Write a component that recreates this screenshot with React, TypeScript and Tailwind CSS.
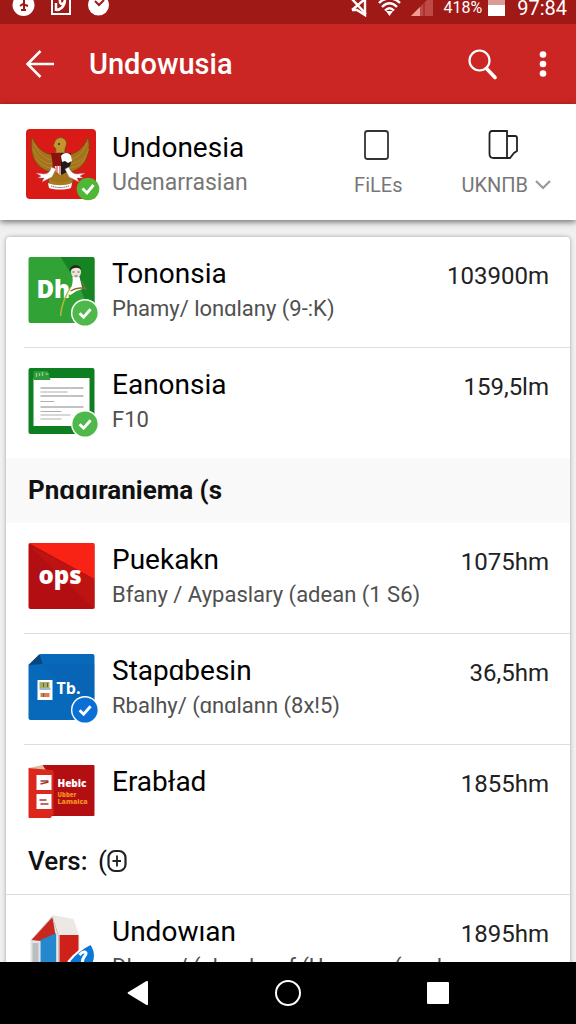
import type { ReactNode } from "react";

function Badge({ color, className }: { color: string; className: string }) {
  return (
    <svg viewBox="0 0 28 28" className={`absolute ${className}`} aria-hidden="true">
      <circle cx="14" cy="14" r="14" fill="#fff" />
      <circle cx="14" cy="14" r="12.6" fill={color} />
      <path d="M8.6 14.2l4 4 7-8" fill="none" stroke="#fff" strokeWidth="2.9" />
    </svg>
  );
}

function GarudaIcon() {
  return (
    <svg viewBox="0 0 70 70" className="size-full" aria-hidden="true">
      <rect width="70" height="70" rx="4" fill="#d91a17" />
      <g fill="#a3741c" stroke="#6d4a10" strokeWidth=".7">
        <path d="M6 8C3 24 9 40 25 43l5-17C18 26 11 19 6 8z" />
        <path d="M62 8c4 16-3 32-18 35l-5-17C50 26 58 19 62 8z" />
        <path d="M26 40h18l3 14-12 5-13-5z" />
        <path d="M29 24c2-3 1-5-2-7l2-5c3-5 9-4 11 0 2 4-2 6-1 12z" fill="#c39430" />
      </g>
      <path
        d="M8 14c4 10 10 16 19 17M7 20c4 9 10 14 19 15M9 28c4 6 9 10 16 11M61 14c-4 10-10 16-19 17M63 20c-4 9-10 14-19 15M60 28c-4 6-9 10-16 11"
        fill="none"
        stroke="#c2923a"
        strokeWidth=".6"
      />
      <circle cx="33" cy="15" r="1" fill="#3a2506" />
      <path d="M25 24h10v13h-8z" fill="#8e100f" />
      <path d="M35 24h10v10l-4 9-6 3z" fill="#221b1b" />
      <path d="M35 27c2-4 9-4 10 0l1 5-4 2-3-2-3 1z" fill="#fff" />
      <path d="M29 37h6v9l-5-3z" fill="#fff" />
      <path d="M31 36v9M34 36v9" stroke="#c22" strokeWidth="1" />
      <path
        d="M25 38c0 4-3 7-7 7l-8-1 5 3-3 2h6l-2 4 10-5 4-8zM43 38c1 4 4 7 8 7l8-1-5 3 3 2h-6l2 4-10-5-4-8z"
        fill="#fff"
        stroke="#8b7770"
        strokeWidth=".4"
      />
      <path d="M23 50c7 5 17 5 24 0l-2 8c-6 3-15 3-21 0z" fill="#ab7b22" />
      <path d="M22 54c7 3 17 3 24 0l-1 5c-6 2-16 2-22 0z" fill="#fff" />
      <path d="M25 57c6 2 12 2 18 0" fill="none" stroke="#777" strokeWidth="1" strokeDasharray="1.5 .6" />
    </svg>
  );
}

function GreenIcon() {
  return (
    <svg viewBox="0 0 66 66" className="size-full" aria-hidden="true">
      <rect width="66" height="66" rx="2" fill="#31a336" />
      <path d="M32 0h32q2 0 2 2v62L50 28z" fill="#178423" />
      <text x="8" y="41" fill="#fff" fontFamily="Open Sans, sans-serif" fontWeight="800" fontSize="24">
        Dh
      </text>
      <path d="M32 59c1-12 5-21 11-29" fill="none" stroke="#b5b83a" strokeWidth="1.5" />
      <path d="M39 37c3-5 6-9 5-17h7l3 12-6 2-6 4z" fill="#fff" />
      <ellipse cx="47.500" cy="15" rx="5" ry="6" fill="#eee5da" />
      <path d="M41 14c0-7 11-8 12-1-3-3-8-3-12 1z" fill="#29231e" />
      <path d="M44 15h2M49 15h2M46 19h3" stroke="#554" strokeWidth="1" />
      <path d="M42 34c5-3 10-4 16-2M53 24l4 7" fill="none" stroke="#8a6b35" strokeWidth="1.400" />
    </svg>
  );
}

function SheetIcon() {
  return (
    <svg viewBox="0 0 66 66" className="size-full" aria-hidden="true">
      <rect width="66" height="66" rx="2" fill="#0d7f20" />
      <path d="M5 10h56v48H5z" fill="#fff" />
      <path d="M5 3h14l3 9H5z" fill="#2e9b3b" />
      <path d="M8 5v4M11 5v3M14 4v4M17 6h3" stroke="#8acb85" strokeWidth="1.400" />
      <g stroke="#858585" strokeWidth="1.100">
        <path d="M12 20h43M12 28h43M12 39h43" />
        <path d="M12 24h27M12 33.500h14M12 43.500h21M12 47h30M12 51h21" opacity=".65" />
      </g>
    </svg>
  );
}

function OpsIcon() {
  return (
    <svg viewBox="0 0 66 66" className="size-full" aria-hidden="true">
      <rect width="66" height="66" rx="2" fill="#b30f12" />
      <path d="M0 0h64q2 0 2 2v34z" fill="#f82315" />
      <path d="M0 2l66 34v30z" fill="#be1313" />
      <text x="10" y="41" fill="#fff" fontFamily="Open Sans, sans-serif" fontWeight="800" fontSize="24">
        ops
      </text>
    </svg>
  );
}

function BlueIcon() {
  return (
    <svg viewBox="0 0 66 66" className="size-full" aria-hidden="true">
      <path d="M12 0h52q2 0 2 2v62q0 2-2 2H2q-2 0-2-2V11z" fill="#0868b9" />
      <path d="M14 10l52 56V10z" fill="#0b61ad" opacity=".3" />
      <path d="M0 11L11 0l3 10z" fill="#07457f" />
      <path d="M9 26h15v20H9z" fill="#fff" />
      <path d="M11 28h10v6H11z" fill="#a8aa67" />
      <path d="M11 35h11" stroke="#4077a0" strokeWidth="1" />
      <path d="M12 39h9v4h-9z" fill="#d9804c" />
      <path d="M15 29v4M19 29v4M15 39v4" stroke="#526d42" strokeWidth="1" />
      <text x="28" y="40" fill="#fff" fontFamily="Open Sans, sans-serif" fontWeight="700" fontSize="16">
        Tb.
      </text>
    </svg>
  );
}

function BoxIcon() {
  return (
    <svg viewBox="0 0 66 53" className="size-full" aria-hidden="true">
      <rect x="14" width="52" height="51" rx="1" fill="#b30f12" />
      <path d="M0 3l14-3 4 6z" fill="#dfbba0" />
      <path d="M0 3l22 2c3 0 3 2 3 3v41l-3 4H1q-1 0-1-1z" fill="#dc281c" />
      <rect x="8" y="10" width="15" height="15" fill="#fff" />
      <rect x="8" y="29" width="15" height="15" fill="#fff" />
      <path d="M12 16h8M12 19l8-2M11 35h7M12 39h8" stroke="#a53a33" strokeWidth="1.600" />
      <text x="29" y="22" fill="#fff" fontFamily="Open Sans, sans-serif" fontWeight="800" fontSize="10">
        Hebic
      </text>
      <text x="29" y="32" fill="#f3901f" fontFamily="Open Sans, sans-serif" fontWeight="800" fontSize="6">
        Ubber
      </text>
      <text x="29" y="39" fill="#f3901f" fontFamily="Open Sans, sans-serif" fontWeight="800" fontSize="7">
        Lamaica
      </text>
    </svg>
  );
}

function HouseIcon() {
  return (
    <svg viewBox="0 0 66 66" className="size-full" aria-hidden="true">
      <path d="M2 25L24 0l4 18L12 27v37H2z" fill="#e3e3e3" />
      <path d="M3 25L24 2l3 18-15 6z" fill="#c9281e" />
      <path d="M4 28h6v36H4z" fill="#b9bec0" />
      <path d="M12 25l16-7v46H12z" fill="#2588cf" />
      <path d="M24 0l21 4 6 17v43H28V20z" fill="#ece9e5" />
      <path d="M31 20h19v44H31z" fill="#ce211a" />
      <path d="M24 2l6 19v43" fill="none" stroke="#c7c3be" strokeWidth="1" />
      <path d="M39 46c7-8 14-14 23-19 7 7 6 18-2 32l-18 4z" fill="#fff" />
      <path d="M42 46c6-7 12-12 20-16 5 7 5 16-3 27l-14 4z" fill="#0a78d6" />
      <path d="M51 40c4-5 8-3 6 0-2 3-3 3-3 7" fill="none" stroke="#fff" strokeWidth="3" />
    </svg>
  );
}

type Item = { title: string; subtitle?: string; amount: string; icon: ReactNode; badge?: string; short?: boolean };

function Row({ title, subtitle, amount, icon, badge, short }: Item) {
  return (
    <li className="pl-[18px] not-first:before:block not-first:before:h-px not-first:before:bg-[#dedede]">
      <div className={`flex items-start pr-[21px] pl-1 ${short ? "h-[82px]" : "h-[110px]"}`}>
        <div className={`relative mt-5 w-[67px] shrink-0 ${short ? "h-[53px]" : "h-[66px]"}`}>
          {icon}
          {badge && <Badge color={badge} className="-right-1 -bottom-1 size-7" />}
        </div>
        <div className="ml-[17px] min-w-0 flex-1 pt-[19px] whitespace-nowrap">
          <h3 className="text-[28px] leading-9 text-black">{title}</h3>
          {subtitle && <p className="text-[22px] leading-[34px] text-[#505050]">{subtitle}</p>}
        </div>
        <span className="pt-[21px] text-2xl leading-9 text-[#222]">{amount}</span>
      </div>
    </li>
  );
}

const downloads: Item[] = [
  { title: "Tononsia", subtitle: "Phamy/ lonɑlany (9-:K)", amount: "103900m", icon: <GreenIcon />, badge: "#4fb84b" },
  { title: "Eanonsia", subtitle: "F10", amount: "159,5lm", icon: <SheetIcon />, badge: "#4fb84b" },
];

const programs: Item[] = [
  { title: "Puekakn", subtitle: "Bfany / Aypaslary (adean (1 S6)", amount: "1075hm", icon: <OpsIcon /> },
  { title: "Stapɑbesin", subtitle: "Rbalhy/ (ɑnɑlann (8x!5)", amount: "36,5hm", icon: <BlueIcon />, badge: "#0b70d5" },
  { title: "Erabład", amount: "1855hm", icon: <BoxIcon />, short: true },
];

const versions: Item[] = [
  { title: "Undowıan", subtitle: "Dlanyu/ (ɑhanlayaf (Uanyara (a ɑ l", amount: "1895hm", icon: <HouseIcon /> },
];

function StatusBar() {
  return (
    <div className="flex h-6 shrink-0 items-start justify-between overflow-hidden bg-[#9f1917] pr-[9px] pl-3 text-white">
      <svg viewBox="0 0 98 24" className="h-6 w-[98px]" aria-hidden="true">
        <circle cx="11.500" cy="5" r="11" fill="#fff" />
        <path d="M12 0v10M8 6l3-2 5 2M9 10h5" fill="none" stroke="#9f1917" strokeWidth="2" />
        <path d="M40-4v18h18V-4" fill="none" stroke="#fff" strokeWidth="2" />
        <path d="M44 11V3M44 10c4 0 9-3 9-11M48-1c-1 7 4 6 5 1" fill="none" stroke="#fff" strokeWidth="2.500" />
        <circle cx="86.500" cy="5" r="10.500" fill="#fff" />
        <path d="M83 1l4 4 5-5" fill="none" stroke="#9f1917" strokeWidth="2" />
      </svg>
      <div className="flex items-start">
        <svg viewBox="0 0 84 24" className="h-6 w-[84px]" aria-hidden="true">
          <path d="M2-2l15 16M3 10h5l8 5V-2M3 10L16-1" fill="none" stroke="#fff" strokeWidth="2.400" />
          <g fill="none" stroke="#fff" strokeWidth="2.400">
            <path d="M30 3c6-6 15-6 21 0M33 7c5-5 10-5 15 0M36 10.500c3-3 6-3 9 0" />
          </g>
          <path d="M37 11h7l-3.500 5z" fill="#fff" />
          <path d="M62 16L84-6v22z" fill="#bf4a45" />
          <path d="M62 16l9-9v9z" fill="#ee9d94" />
          <path d="M75 3v13" stroke="#9f1917" strokeWidth="1" />
        </svg>
        <span className="ml-2.5 text-base leading-4">418%</span>
        <svg viewBox="0 0 17 24" className="mr-3 ml-1.5 h-6 w-[17px]" aria-hidden="true">
          <path d="M0-3h17v8H0z" fill="#d99b95" />
          <path d="M0 5h17v11H0z" fill="#fff" />
        </svg>
        <span className="text-xl leading-4">97:84</span>
      </div>
    </div>
  );
}

export default function App() {
  return (
    <div className="flex h-screen flex-col overflow-hidden bg-[#f0f0f1] font-[Roboto,sans-serif]">
      <StatusBar />
      <header className="flex h-20 shrink-0 items-center bg-[#cb2623] pr-[21px] pl-6 text-white">
        <button aria-label="Back" className="size-8">
          <svg viewBox="0 0 32 32" fill="none" stroke="currentColor" strokeWidth="2.500">
            <path d="M30 16H3.500M16.500 3L3.500 16l13 13" />
          </svg>
        </button>
        <h1 className="ml-[33px] flex-1 text-[29px] leading-9 font-medium">Undowusia</h1>
        <button aria-label="Search" className="size-8">
          <svg viewBox="0 0 32 32" fill="none" stroke="currentColor">
            <circle cx="13.500" cy="12.500" r="10" strokeWidth="2.200" />
            <path d="M20.500 20.500l8.500 9" strokeWidth="3.600" strokeLinecap="round" />
          </svg>
        </button>
        <button aria-label="More options" className="ml-[33px] h-8 w-6">
          <svg viewBox="0 0 24 32" fill="currentColor">
            <circle cx="12" cy="6.500" r="3.300" />
            <circle cx="12" cy="16" r="3.300" />
            <circle cx="12" cy="25.500" r="3.300" />
          </svg>
        </button>
      </header>

      <section className="z-10 flex h-[116px] shrink-0 items-start bg-white pr-6 pl-[26px] shadow-[0_2px_6px_#0008]">
        <div className="relative mt-[25px] size-[70px] shrink-0">
          <GarudaIcon />
          <svg viewBox="0 0 24 24" className="absolute -right-1 -bottom-0.5 size-6" aria-hidden="true">
            <circle cx="12" cy="12" r="11.300" fill="#4fb735" />
            <path d="M6.500 11.500l4.500 4.500 6.500-8" fill="none" stroke="#fff" strokeWidth="2.800" />
          </svg>
        </div>
        <div className="ml-4 flex-1 pt-[26px]">
          <h2 className="text-[28px] leading-9 text-black">Undonesia</h2>
          <p className="text-[23px] leading-[34px] text-[#777]">Udenarrasian</p>
        </div>
        <button className="mt-[25px] flex flex-col items-center text-[#777]">
          <svg viewBox="0 0 30 32" className="h-8 w-[30px]" fill="none" stroke="#333" strokeWidth="1.800" aria-hidden="true">
            <rect x="2" y="2" width="23" height="28" rx="2.500" />
          </svg>
          <span className="pt-2 text-xl leading-8">FiLEs</span>
        </button>
        <button className="mt-[25px] ml-[59px] flex flex-col items-start text-[#777]">
          <svg viewBox="0 0 32 32" className="ml-[26px] h-8 w-8" fill="none" stroke="#222" strokeWidth="1.800" aria-hidden="true">
            <path d="M20 2H5Q2.500 2 2.500 5v20q0 4 4 4H20zM20 7h8q2 0 2 2v13l-3 2-4 5h-3" />
          </svg>
          <span className="flex items-center pt-2 text-xl leading-8">
            UKNΠB
            <svg viewBox="0 0 18 12" className="ml-1.5 h-3 w-[18px]" fill="none" stroke="#999" strokeWidth="2.200" aria-hidden="true">
              <path d="M2 2l7 7 7-7" />
            </svg>
          </span>
        </button>
      </section>

      <main className="min-h-0 flex-1 overflow-hidden px-1.5 pt-[17px]">
        <div className="rounded-t-sm bg-white shadow-[0_0_4px_#0005]">
          <ul>
            {downloads.map((item) => (
              <Row key={item.title} {...item} />
            ))}
          </ul>
          <h2 className="h-[65px] bg-[#f9f9f9] px-[22px] py-[14px] text-[26px] leading-9 font-bold text-[#111]">
            Pnɑɑıraniema (s
          </h2>
          <ul>
            {programs.map((item) => (
              <Row key={item.title} {...item} />
            ))}
          </ul>
          <h2 className="flex h-[68px] items-center border-b border-[#dcdcdc] px-[22px] text-[26px] leading-9 font-medium text-[#111]">
            Vers:&nbsp;<span className="ml-1 font-normal">(</span>
            <svg viewBox="0 0 20 24" className="h-6 w-5" fill="none" stroke="#222" strokeWidth="2.200" aria-hidden="true">
              <rect x="1.500" y="2" width="17" height="20" rx="6.500" />
              <path d="M10 6.500v11M5.500 12h8.500" strokeWidth="1.800" />
            </svg>
          </h2>
          <ul>
            {versions.map((item) => (
              <Row key={item.title} {...item} />
            ))}
          </ul>
        </div>
      </main>

      <nav className="z-10 flex h-[62px] shrink-0 items-center justify-center gap-[118px] bg-black text-white">
        <button aria-label="Back" className="size-8">
          <svg viewBox="0 0 32 32" fill="currentColor">
            <path d="M6 15.200L24.500 4q1.500-.5 1.500 1v22q0 1.500-1.500 1L6 16.800q-1-.8 0-1.600z" />
          </svg>
        </button>
        <button aria-label="Home" className="size-8">
          <svg viewBox="0 0 32 32" fill="none" stroke="currentColor" strokeWidth="2">
            <circle cx="16" cy="16" r="12" />
          </svg>
        </button>
        <button aria-label="Recent apps" className="size-8">
          <svg viewBox="0 0 32 32" fill="currentColor">
            <rect x="5" y="5" width="22" height="22" rx="1" />
          </svg>
        </button>
      </nav>
    </div>
  );
}
